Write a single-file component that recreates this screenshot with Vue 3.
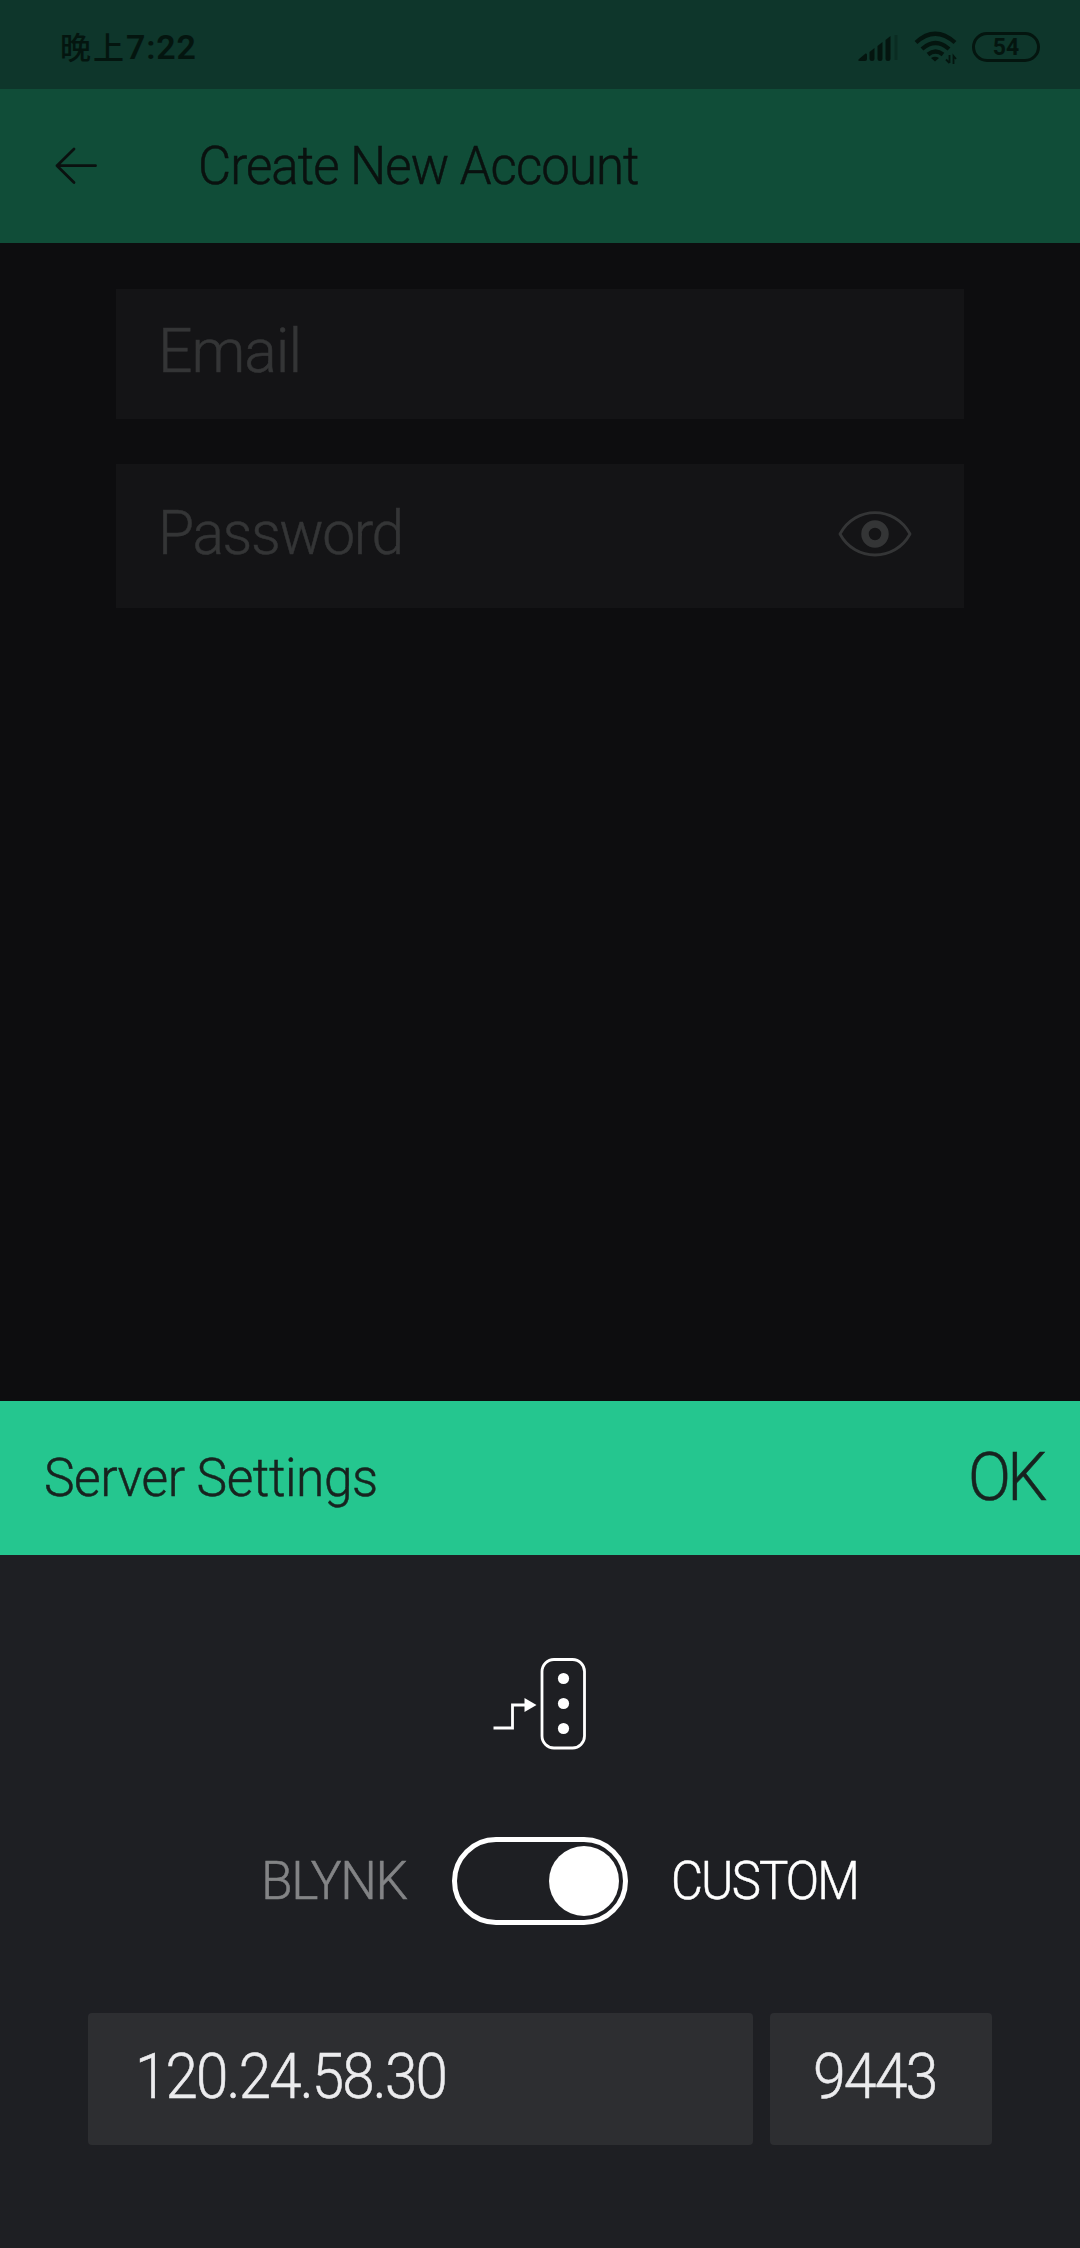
<script setup>
import { ref } from 'vue'

const server = ref({ host: '120.24.58.30', port: '9443' })
const dots = [20.5, 45.5, 70.5]
</script>

<template>
  <div class="screen">
    <header class="status">
      <span class="clock">晚上<b>7:22</b></span>
      <div class="indicators">
        <svg class="signal" width="42" height="32" viewBox="0 0 42 32">
          <g fill="#04150f">
            <path d="M1 27 L7.500 21.500 Q9 21 9 23 V27 Q9 29 7 29 H2 Q-1 29 1 27Z" />
            <path d="M11.500 20 L16.500 16 V27 Q16.500 29 14 29 T11.500 27Z" />
            <path d="M19.500 14 L24.500 10 V27 Q24.500 29 22 29 T19.500 27Z" />
            <path d="M27.500 8 L32.500 4 V27 Q32.500 29 30 29 T27.500 27Z" />
          </g>
          <path d="M38 3 V28" stroke="#0a2c22" stroke-width="3" />
        </svg>
        <svg class="wifi" width="44" height="34" viewBox="0 0 44 34" fill="none" stroke="#04150f">
          <path d="M2 11.500 Q21 -6 41 11.500" stroke-width="4.200" />
          <path d="M8 18 Q21.500 6 35 18" stroke-width="4.200" />
          <path d="M14 23.500 Q21.500 17.500 29 23.500" stroke-width="4.200" />
          <path d="M17 27 Q21 24.500 25 27 L21 30.500Z" fill="#04150f" stroke="none" />
          <path d="M35.500 24 V32 M32 28.500 L35.500 32 M39.500 33 V25 L42 28" stroke-width="1.800" />
        </svg>
        <span class="battery">54</span>
      </div>
    </header>

    <nav class="bar">
      <svg width="44" height="38" viewBox="0 0 44 38" fill="none" stroke="#0a110f" stroke-width="2.800" stroke-linecap="round" stroke-linejoin="round">
        <path d="M20 2 L3 18.700 L20 35.500 M3 18.700 H41.500" />
      </svg>
      <h1 class="title">Create New Account</h1>
    </nav>

    <main class="form">
      <div class="field email"><span class="hint hint-email">Email</span></div>
      <div class="field password">
        <span class="hint hint-password">Password</span>
        <svg class="eye" width="74" height="46" viewBox="0 0 74 46" fill="none" stroke="#343536">
          <path d="M2 23 C17 -5.500 57 -5.500 72 23 C57 51 17 51 2 23Z" stroke-width="2.800" stroke-linejoin="round" />
          <circle cx="37" cy="23" r="10" stroke-width="7.500" />
        </svg>
      </div>
    </main>

    <section class="sheet">
      <div class="sheet-head">
        <h2 class="sheet-title">Server Settings</h2>
        <span class="ok">OK</span>
      </div>

      <svg class="server-icon" width="94" height="92" viewBox="0 0 94 92" fill="none" stroke="#fff">
        <rect x="49" y="1.500" width="42.500" height="88.500" rx="12" stroke-width="2.800" />
        <circle v-for="y in dots" :key="y" cx="70.500" :cy="y" r="5.600" fill="#fff" stroke="none" />
        <path d="M0.500 70 H19.500 V47 H34" stroke-width="2.800" />
        <path d="M31.500 40 L43.500 47 L31.500 54Z" fill="#fff" stroke="none" />
      </svg>

      <div class="mode">
        <span class="blynk">BLYNK</span>
        <span class="toggle"><i class="knob"></i></span>
        <span class="custom">CUSTOM</span>
      </div>

      <div class="address">
        <div class="input host"><span class="host-text">{{ server.host }}</span></div>
        <div class="input port"><span class="port-text">{{ server.port }}</span></div>
      </div>
    </section>
  </div>
</template>

<style>
body {
  margin: 0;
  background: #0d0d0f;
}
</style>

<style scoped>
.screen {
  width: 1080px;
  height: 2248px;
  display: flex;
  flex-direction: column;
  overflow: hidden;
  background: #0d0d0f;
  font-family: Roboto, "Noto Sans CJK SC", sans-serif;
  font-weight: 300;
}
h1, h2 {
  margin: 0;
  font-weight: 300;
}
.title, .hint, .sheet-title, .ok, .blynk, .custom, .host-text, .port-text {
  display: block;
  white-space: nowrap;
  line-height: 80px;
  transform-origin: left center;
  -webkit-text-stroke: .5px currentColor;
}
.status {
  height: 89px;
  flex: none;
  box-sizing: border-box;
  padding: 0 40px 0 60px;
  display: flex;
  justify-content: space-between;
  background: #0e362b;
  color: #04150f;
}
.clock {
  margin-top: 26px;
  font: 500 31px/40px "Noto Sans CJK SC", sans-serif;
  letter-spacing: 2px;
}
.clock b {
  font: 600 34px/40px Roboto, sans-serif;
  letter-spacing: .8px;
}
.indicators {
  display: flex;
  align-items: flex-start;
}
.signal { margin: 32px 14px 0 0; }
.wifi { margin: 31px 14px 0 0; }
.battery {
  box-sizing: border-box;
  width: 68px;
  height: 30px;
  margin-top: 32px;
  border: 3px solid #04150f;
  border-radius: 15px;
  text-align: center;
  font-size: 23px;
  font-weight: 700;
  line-height: 25px;
}
.bar {
  height: 154px;
  flex: none;
  padding-left: 54px;
  display: flex;
  align-items: center;
  background: #104d38;
}
.title {
  margin-left: 100px;
  color: #0a110f;
  font-size: 53.400px;
  letter-spacing: -1px;
  transform: scaleX(.955);
}
.form {
  height: 1158px;
  flex: none;
  box-sizing: border-box;
  padding: 46px 116px 0;
}
.field {
  box-sizing: border-box;
  display: flex;
  align-items: center;
  justify-content: space-between;
  padding: 0 52px 6px 42px;
  background: #141416;
  color: #343536;
}
.email { height: 130px; }
.password {
  height: 144px;
  margin-top: 45px;
}
.eye { margin-top: 2px; }
.hint { font-size: 61.900px; }
.hint-email {
  letter-spacing: -1px;
  transform: scaleX(.98);
}
.hint-password {
  letter-spacing: -1.500px;
  transform: scaleX(.95);
}
.sheet {
  flex: 1;
  display: flex;
  flex-direction: column;
  align-items: center;
  background: #1e1f23;
}
.sheet-head {
  align-self: stretch;
  height: 154px;
  flex: none;
  box-sizing: border-box;
  padding: 0 0 0 44px;
  display: flex;
  align-items: center;
  background: #25c68f;
  color: #17231f;
}
.sheet-title {
  width: 924px;
  font-size: 53.400px;
  letter-spacing: -.5px;
  transform: scaleX(.965);
}
.ok {
  margin-bottom: 2px;
  font-size: 67.500px;
  letter-spacing: -4px;
  transform: scaleX(.94);
}
.server-icon {
  margin-top: 103px;
  flex: none;
}
.mode {
  margin-top: 87px;
  align-self: stretch;
  height: 88px;
  display: flex;
  align-items: center;
  padding-left: 261px;
}
.blynk {
  width: 191px;
  color: #838486;
  font-size: 53.400px;
  letter-spacing: -1.500px;
  transform: scaleX(.965);
}
.toggle {
  box-sizing: border-box;
  width: 176px;
  height: 88px;
  border: 5px solid #fff;
  border-radius: 44px;
  display: flex;
  align-items: center;
  justify-content: flex-end;
  padding-right: 4px;
}
.knob {
  width: 70px;
  height: 70px;
  border-radius: 50%;
  background: #fff;
}
.custom {
  margin-left: 43px;
  color: #fff;
  font-size: 53.400px;
  letter-spacing: -2px;
  transform: scaleX(.922);
}
.address {
  margin-top: 88px;
  align-self: stretch;
  display: flex;
  gap: 17px;
  padding-left: 88px;
}
.input {
  box-sizing: border-box;
  height: 132px;
  display: flex;
  align-items: center;
  padding-bottom: 4px;
  border-radius: 4px;
  background: #2d2e31;
  color: #ececee;
  font-size: 62.500px;
}
.host {
  width: 665px;
  padding-left: 47px;
}
.port {
  width: 222px;
  padding-left: 43px;
}
.host-text {
  letter-spacing: -2px;
  transform: scaleX(.934);
}
.port-text {
  letter-spacing: -2px;
  transform: scaleX(.945);
}
</style>
